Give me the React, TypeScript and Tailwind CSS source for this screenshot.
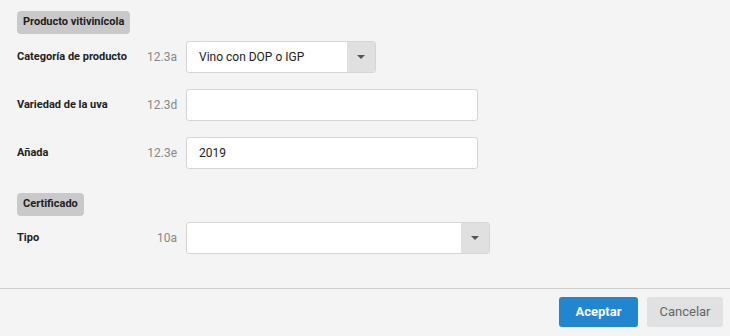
import React from 'react';

const Caret = () => (
  <svg width="8" height="4" viewBox="0 0 8 4" className="fill-[#555]">
    <path d="M0 0h8L4 4z" />
  </svg>
);

const Row = ({ label, code, children }: { label: string; code: string; children: React.ReactNode }) => (
  <div className="flex items-center h-8">
    <span className="w-[130px] text-[11px] font-bold text-[#222]">{label}</span>
    <span className="w-[30px] text-right text-[12px] text-[#888]">{code}</span>
    <div className="ml-[9px]">{children}</div>
  </div>
);

const Chip = ({ text }: { text: string }) => (
  <div className="flex w-fit items-center h-[23px] px-[6px] rounded-[4px] bg-[#c9c9c9] text-[11px] font-bold text-[#222]">
    {text}
  </div>
);

const App = () => {
  return (
    <div className="w-[730px] h-[336px] bg-[#f4f4f4] font-['Roboto',sans-serif] overflow-hidden flex flex-col">
      <div className="h-[288px] pl-[17px] pt-[11px]">
        {/* Producto vitivinícola */}
        <Chip text="Producto vitivinícola" />
        <div className="mt-[7px] flex flex-col gap-[16px]">
          <Row label="Categoría de producto" code="12.3a">
            <div className="flex w-[190px] h-8 border border-[#d6d6d6] rounded-[3px] bg-white overflow-hidden">
              <div className="flex-1 flex items-center pl-[12px] text-[12px] text-[#222]">Vino con DOP o IGP</div>
              <div className="w-[28px] bg-[#e0e0e0] flex items-center justify-center">
                <Caret />
              </div>
            </div>
          </Row>
          <Row label="Variedad de la uva" code="12.3d">
            <div className="w-[292px] h-8 border border-[#d6d6d6] rounded-[3px] bg-white" />
          </Row>
          <Row label="Añada" code="12.3e">
            <div className="w-[292px] h-8 border border-[#d6d6d6] rounded-[3px] bg-white flex items-center pl-[12px] text-[12px] text-[#222]">
              2019
            </div>
          </Row>
        </div>

        {/* Certificado */}
        <div className="mt-[24px]">
          <Chip text="Certificado" />
        </div>
        <div className="mt-[6px]">
          <Row label="Tipo" code="10a">
            <div className="flex w-[304px] h-8 border border-[#d6d6d6] rounded-[3px] bg-white overflow-hidden">
              <div className="flex-1" />
              <div className="w-[28px] bg-[#e0e0e0] flex items-center justify-center">
                <Caret />
              </div>
            </div>
          </Row>
        </div>
      </div>

      <div className="border-t border-[#cfcfcf] flex justify-end gap-[9px] pt-[8px] pr-[7px]">
        <button className="w-[79px] h-[30px] rounded-[3px] bg-[#2185d0] text-white text-[13px] font-bold">
          Aceptar
        </button>
        <button className="w-[76px] h-[30px] rounded-[3px] bg-[#e0e1e2] text-[#666] text-[13px]">
          Cancelar
        </button>
      </div>
    </div>
  );
};

export default App;
